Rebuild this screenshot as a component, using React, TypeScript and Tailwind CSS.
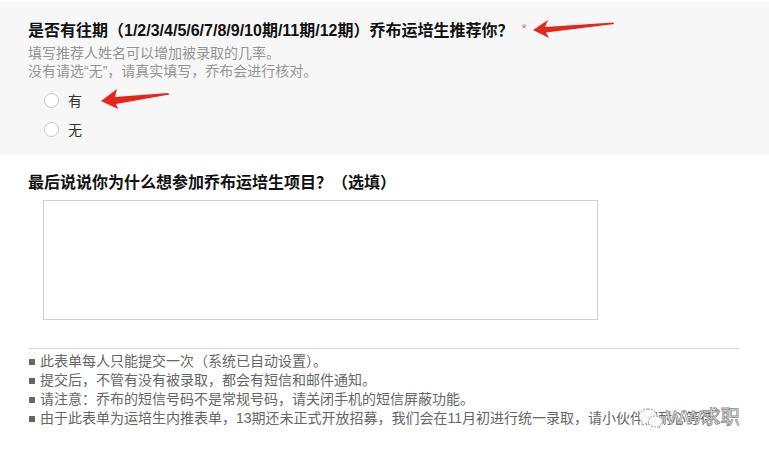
import React from "react";

const font = { fontFamily: "'Liberation Sans', 'Noto Sans CJK SC', sans-serif" };

function LeftArrow({ w, h, d }: { w: number; h: number; d: string }) {
  return (
    <svg width={w} height={h} viewBox={`0 0 ${w} ${h}`}>
      <path d={d} fill="#e5261c" />
    </svg>
  );
}

function Radio({ label }: { label: string }) {
  return (
    <div className="flex h-[29px] items-center pl-[16px]">
      <span className="box-border h-[15px] w-[15px] rounded-full border border-[#c8c8c8] bg-white" />
      <span className="ml-[9px] text-[14px] leading-[18px] text-[#333]">{label}</span>
    </div>
  );
}

function Bullet({ children }: { children: React.ReactNode }) {
  return (
    <div className="flex h-[19px] items-center whitespace-nowrap text-[14px] leading-[19px] text-[#666]">
      <span className="ml-[1px] mr-[5px] inline-block h-[6px] w-[6px] bg-[#666]" />
      <span>{children}</span>
    </div>
  );
}

export default function App() {
  return (
    <div className="relative h-[455px] w-[769px] overflow-hidden bg-white" style={font}>
      <div className="relative mt-[2px] flex h-[153px] flex-col bg-[#f7f7f7] pl-[28px] pt-[20px]">
        <div className="flex items-center text-[16px] font-bold leading-[18px] text-[#111]">
          <span>是否有往期（1/2/3/4/5/6/7/8/9/10期/11期/12期）乔布运培生推荐你？</span>
          <span className="ml-[8px] -mt-[4px] text-[13px] font-normal text-[#c77a7c]">*</span>
        </div>
        <div className="mt-[4px] text-[14px] leading-[18px] text-[#949494]">
          <div>填写推荐人姓名可以增加被录取的几率。</div>
          <div>没有请选“无”，请真实填写，乔布会进行核对。</div>
        </div>
        <div className="mt-[6px] flex flex-col">
          <Radio label="有" />
          <Radio label="无" />
        </div>
        <div className="absolute left-[530px] top-[14px]">
          <LeftArrow w={86} h={26} d="M3,14 L18,4 L15,11 L83,6.5 L84.5,8 L16,16.5 L19,22 Z" />
        </div>
        <div className="absolute left-[98px] top-[83px]">
          <LeftArrow w={74} h={26} d="M3,16 L19,4 L17,12 L70,8 L71.5,9.5 L18,19 L20,24 Z" />
        </div>
      </div>

      <div className="flex flex-col pl-[28px]">
        <div className="mt-[19px] text-[16px] font-bold leading-[18px] text-[#111]">
          最后说说你为什么想参加乔布运培生项目？（选填）
        </div>
        <div className="ml-[15px] mt-[8px] box-border h-[120px] w-[555px] border border-[#cfcfcf] bg-white" />
        <div className="mt-[28px] h-px w-[712px] bg-[#dcdcdc]" />
        <div className="relative mt-[3px] flex flex-col">
          <Bullet>此表单每人只能提交一次（系统已自动设置）。</Bullet>
          <Bullet>提交后，不管有没有被录取，都会有短信和邮件通知。</Bullet>
          <Bullet>请注意：乔布的短信号码不是常规号码，请关闭手机的短信屏蔽功能。</Bullet>
          <Bullet>由于此表单为运培生内推表单，13期还未正式开放招募，我们会在11月初进行统一录取，请小伙伴们耐心等待。</Bullet>
          <div className="absolute left-[610px] top-[55px] flex items-center">
            <svg width="26" height="22" viewBox="0 0 26 22">
              <path
                d="M10,2 C4.5,2 1,5.5 1,9.5 C1,12 2.3,14 4.5,15.3 L3.8,18.5 L7.5,16.6 C8.3,16.8 9.1,16.9 10,16.9 C15.5,16.9 19,13.4 19,9.5 C19,5.5 15.5,2 10,2 Z"
                fill="#fff"
                stroke="#9a9a9a"
                strokeWidth="1"
                strokeDasharray="2 1"
              />
              <path
                d="M17,9 C13,9 10.5,11.6 10.5,14.5 C10.5,17.4 13,20 17,20 C17.8,20 18.5,19.9 19.2,19.7 L22,21 L21.4,18.6 C23.3,17.6 24.5,16.1 24.5,14.5 C24.5,11.6 21.5,9 17,9 Z"
                fill="#fff"
                stroke="#9a9a9a"
                strokeWidth="1"
                strokeDasharray="2 1"
              />
            </svg>
            <span className="ml-[2px] text-[19px] leading-[22px] text-white [-webkit-text-stroke:0.8px_#8a8a8a]">
              WW求职
            </span>
          </div>
        </div>
      </div>
    </div>
  );
}
